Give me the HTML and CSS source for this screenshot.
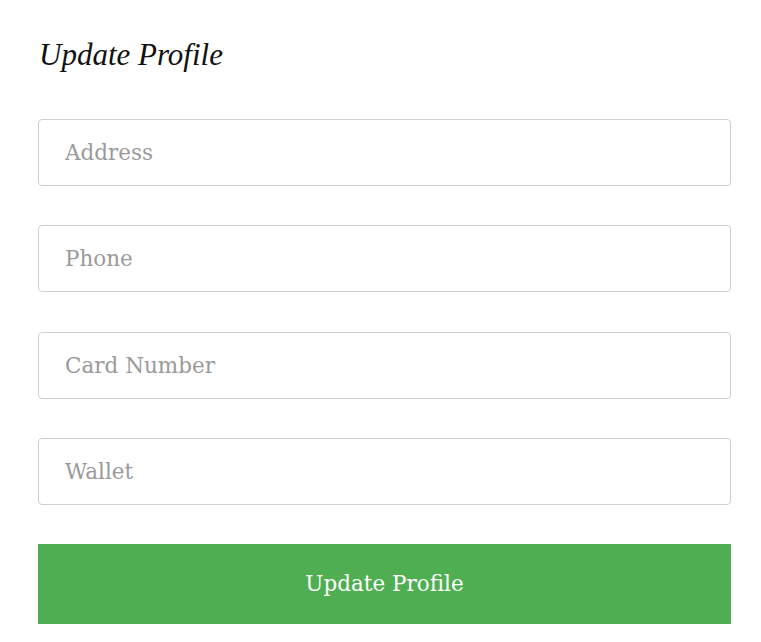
FILE: index.html
```html
<!DOCTYPE html>
<html>
<head>
<meta charset="utf-8">
<link rel="stylesheet" href="styles.css">
</head>
<body>
<div class="page">
  <h2 class="title">Update Profile</h2>
  <form class="form">
    <input class="field" type="text" placeholder="Address">
    <input class="field" type="text" placeholder="Phone">
    <input class="field" type="text" placeholder="Card Number">
    <input class="field" type="text" placeholder="Wallet">
    <button class="submit" type="button">Update Profile</button>
  </form>
</div>
</body>
</html>
```
FILE: styles.css
```css
html, body {
  margin: 0;
  padding: 0;
  background: #fff;
}
.page {
  padding: 35px 30px 0 38px;
  width: 693px;
}
.title {
  margin: 0 0 0 1px;
  font-family: "Liberation Serif", serif;
  font-style: italic;
  font-weight: normal;
  font-size: 31px;
  line-height: 40px;
  color: #111;
}
.form {
  margin-top: 44px;
  display: flex;
  flex-direction: column;
  gap: 39.3px;
}
.field {
  box-sizing: border-box;
  width: 693px;
  height: 67px;
  margin: 0;
  padding: 0 26px;
  border: 1px solid #cfcfcf;
  border-radius: 4px;
  font-family: "DejaVu Serif", serif;
  font-size: 21.5px;
  color: #333;
  outline: none;
}
.field::placeholder {
  color: #9a9a9a;
}
.submit {
  box-sizing: border-box;
  width: 693px;
  height: 80px;
  margin: 0;
  border: none;
  background: #4fae52;
  color: #fff;
  font-family: "DejaVu Serif", serif;
  font-size: 21.5px;
  padding: 0 0 2px;
}
```
